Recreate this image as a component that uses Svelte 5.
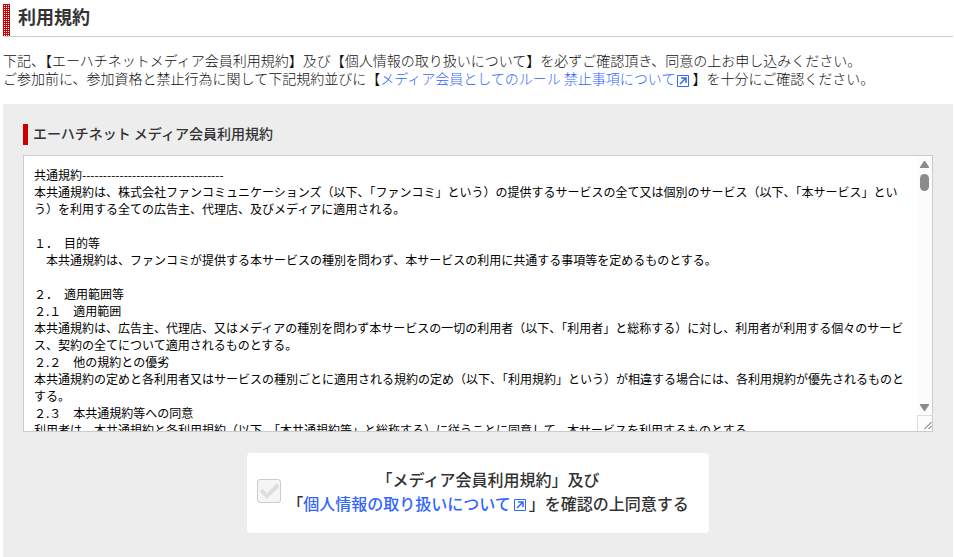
<script lang="ts">
  const dashes = '-'.repeat(34);

  let agreed = $state(true);

  const terms = `共通規約${dashes}
本共通規約は、株式会社ファンコミュニケーションズ（以下、「ファンコミ」という）の提供するサービスの全て又は個別のサービス（以下、「本サービス」という）を利用する全ての広告主、代理店、及びメディアに適用される。

１．　目的等
　本共通規約は、ファンコミが提供する本サービスの種別を問わず、本サービスの利用に共通する事項等を定めるものとする。

２．　適用範囲等
２.１　適用範囲
本共通規約は、広告主、代理店、又はメディアの種別を問わず本サービスの一切の利用者（以下、「利用者」と総称する）に対し、利用者が利用する個々のサービス、契約の全てについて適用されるものとする。
２.２　他の規約との優劣
本共通規約の定めと各利用者又はサービスの種別ごとに適用される規約の定め（以下、「利用規約」という）が相違する場合には、各利用規約が優先されるものとする。
２.３　本共通規約等への同意
利用者は、本共通規約と各利用規約（以下、「本共通規約等」と総称する）に従うことに同意して、本サービスを利用するものとする。`;
</script>

{#snippet external()}
  <svg class="external" viewBox="0 0 12 12" aria-hidden="true">
    <path d="M.5 .5h11v11H.5z" />
    <path class="arrow" d="M3 9l6-6 M4 3h5v5" />
  </svg>
{/snippet}

<main lang="ja">
  <h1>利用規約</h1>

  <p class="lead">
    下記、【エーハチネットメディア会員利用規約】及び【個人情報の取り扱いについて】を必ずご確認頂き、同意の上お申し込みください。<br />
    ご参加前に、参加資格と禁止行為に関して下記規約並びに【<a href="#rules">メディア会員としてのルール 禁止事項について{@render external()}</a>】を十分にご確認ください。
  </p>

  <section class="panel">
    <h2><label for="terms">エーハチネット メディア会員利用規約</label></h2>
    <div class="terms">
      <textarea id="terms" readonly value={terms}></textarea>
      <div class="scrollbar" aria-hidden="true">
        <svg width="15" height="18"><path d="M3 12h9v-1L8 5H7l-4 6z" /></svg>
        <span class="thumb"></span>
        <svg class="down" width="15" height="15"><path d="M3 4h9v1l-4 6H7L3 5z" /></svg>
        <svg class="grip" width="15" height="15"><path d="M6.500 13l7-7 M10.500 13l3-3" /></svg>
      </div>
    </div>

    <div class="consent">
      <input id="agree" type="checkbox" bind:checked={agreed} disabled />
      <label for="agree">
        「メディア会員利用規約」及び<br />
        「<a href="#privacy">個人情報の取り扱いについて{@render external()}</a>」を確認の上同意する
      </label>
    </div>
  </section>
</main>

<style>
  :global(body) {
    margin: 0;
    background: #fff;
  }

  main {
    padding: 4px 1px 0 3px;
    color: #333;
    font-family: 'Noto Sans CJK JP', sans-serif;
    font-size: 14px;
    font-weight: 300;
  }

  h1 {
    display: flex;
    gap: 8px;
    margin: 0;
    border-bottom: 1px solid #ccc;
    font-size: 18px;
    font-weight: 700;
    line-height: 24px;
  }

  h1::before {
    content: '';
    width: 7px;
    height: 32px;
    background:
      repeating-linear-gradient(90deg, #c00 0 1px, transparent 1px 2px),
      repeating-linear-gradient(#c00 0 1px, #fff 1px 2px);
  }

  .lead {
    margin: 14px 0 17px;
    color: #111;
    line-height: 18px;
  }

  a {
    color: #36f;
    text-decoration: none;
  }

  .external {
    width: 12px;
    height: 12px;
    margin: 0 3px 0 2px;
    vertical-align: -3px;
    fill: none;
    stroke: currentColor;
  }

  .external .arrow {
    stroke-width: 1.500;
  }

  .panel {
    padding: 20px 20px 24px;
    background: #ededed;
  }

  h2 {
    margin: 0 0 10px;
    padding-left: 5px;
    border-left: 5px solid #c00;
    font-size: 14px;
    font-weight: 500;
    line-height: 21px;
  }

  h2 label {
    display: block;
    line-height: 19px;
    padding-bottom: 2px;
  }

  .terms {
    position: relative;
  }

  textarea {
    display: block;
    box-sizing: border-box;
    width: 100%;
    height: 277px;
    margin: 0;
    padding: 10px 25px 10px 10px;
    border: 1px solid #ccc;
    outline: 0;
    resize: none;
    background: #fff;
    color: #000;
    font: 400 12px/17px 'Noto Sans CJK JP', sans-serif;
  }

  .scrollbar {
    position: absolute;
    inset: 1px 1px 1px auto;
    display: flex;
    flex-direction: column;
    align-items: center;
    width: 15px;
    background: #fcfcfc;
    pointer-events: none;
  }

  .scrollbar svg {
    fill: #8b8b8b;
  }

  .thumb {
    width: 9px;
    height: 17px;
    border-radius: 5px;
    background: #8b8b8b;
  }

  .scrollbar .down {
    margin-top: auto;
  }

  .scrollbar .grip {
    border: solid #dcdcdc;
    border-width: 1px 0 0 1px;
    fill: none;
    stroke: #555;
  }

  .consent {
    display: flex;
    align-items: center;
    gap: 6px;
    width: fit-content;
    margin: 21px auto 0;
    padding: 14px 20px 18px 10px;
    border-radius: 4px;
    background: #fff;
  }

  .consent label {
    font-size: 16px;
    font-weight: 500;
    line-height: 24px;
    text-align: center;
  }

  .consent .external {
    margin-left: 3px;
    vertical-align: -1px;
  }

  .consent input {
    flex: none;
    appearance: none;
    width: 24px;
    height: 24px;
    margin: 0;
    border: 1px solid #ccc;
    border-radius: 3px;
    background: #f5f5f5 url("data:image/svg+xml,%3Csvg xmlns='http://www.w3.org/2000/svg' viewBox='0 0 22 22'%3E%3Cpath d='M3 10l6 6L20 5' fill='none' stroke='%23ddd' stroke-width='4'/%3E%3C/svg%3E");
  }
</style>
